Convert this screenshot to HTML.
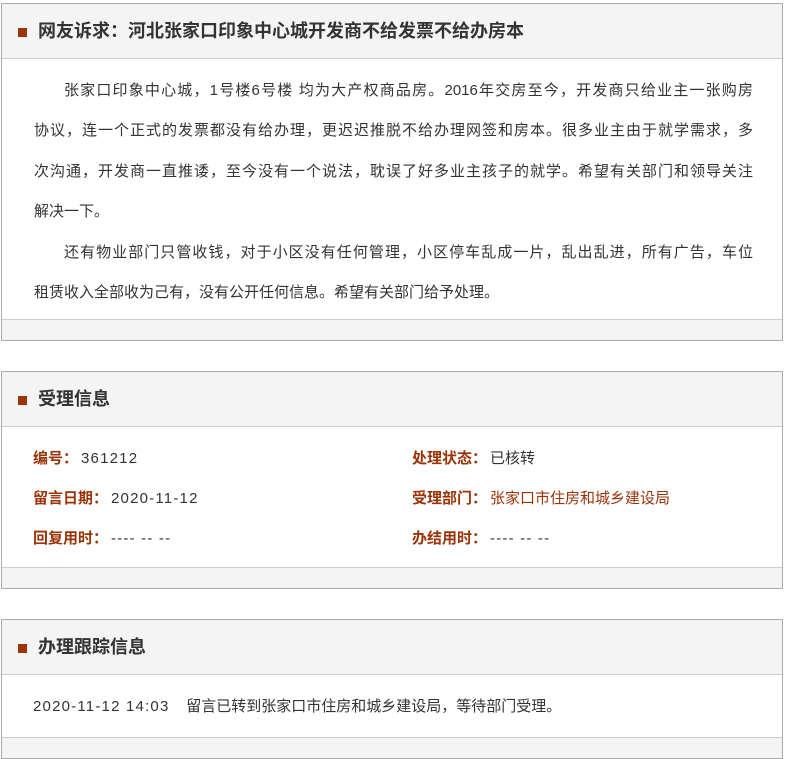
<!DOCTYPE html>
<html><head><meta charset="utf-8"><style>
*{margin:0;padding:0;box-sizing:border-box}
body{width:786px;height:741px;overflow:hidden;background:#fff;font-family:"Liberation Sans","Noto Sans CJK SC",sans-serif;color:#333}
.p{position:absolute;left:1px;width:782px;border:1px solid #aaa}
.h{height:55px;background:#f4f4f4;border-bottom:1px solid #ccc;position:relative}
.h i{position:absolute;left:16px;top:24px;width:9px;height:9px;background:#9b3308}
.h b{position:absolute;left:36px;top:14px;font-size:18px;line-height:26px;color:#333;white-space:nowrap}
.f{height:21px;background:#f4f4f4;border-top:1px solid #ccc}
.b{font-size:15px;line-height:40.4px;padding:12px 29px 6px 32px}
.b div{white-space:nowrap;text-align:justify;text-align-last:justify}
.b div.n{text-align-last:left}
.b div.in{padding-left:30px}
.r{position:relative;height:40px;font-size:15px;line-height:40px;white-space:nowrap}
.r>span{position:absolute;white-space:nowrap}
.l{color:#9b3308;font-weight:bold;margin-right:3px}
.v{letter-spacing:1.2px}
</style></head><body>
<div class="p" style="top:3px">
<div class="h"><i></i><b>网友诉求：河北张家口印象中心城开发商不给发票不给办房本</b></div>
<div class="b" style="height:260px">
<div class="in">张家口印象中心城，1号楼6号楼 均为大产权商品房。2016年交房至今，开发商只给业主一张购房</div>
<div>协议，连一个正式的发票都没有给办理，更迟迟推脱不给办理网签和房本。很多业主由于就学需求，多</div>
<div>次沟通，开发商一直推诿，至今没有一个说法，耽误了好多业主孩子的就学。希望有关部门和领导关注</div>
<div class="n">解决一下。</div>
<div class="in">还有物业部门只管收钱，对于小区没有任何管理，小区停车乱成一片，乱出乱进，所有广告，车位</div>
<div class="n">租赁收入全部收为己有，没有公开任何信息。希望有关部门给予处理。</div>
</div>
<div class="f"></div></div>

<div class="p" style="top:371px">
<div class="h"><i></i><b>受理信息</b></div>
<div style="height:140px;padding-top:12px">
<div class="r"><span style="left:31px"><span class="l">编号：</span><span class="v">361212</span></span><span style="left:410px"><span class="l">处理状态：</span>已核转</span></div>
<div class="r"><span style="left:31px"><span class="l">留言日期：</span><span class="v">2020-11-12</span></span><span style="left:410px"><span class="l">受理部门：</span><span style="color:#9b3308">张家口市住房和城乡建设局</span></span></div>
<div class="r"><span style="left:31px"><span class="l">回复用时：</span><span class="v">---- -- --</span></span><span style="left:410px"><span class="l">办结用时：</span><span class="v">---- -- --</span></span></div>
</div>
<div class="f"></div></div>

<div class="p" style="top:619px;height:140px">
<div class="h"><i></i><b>办理跟踪信息</b></div>
<div style="height:62px;padding-top:12px"><div class="r"><span style="left:31px"><span class="v">2020-11-12 14:03</span>&nbsp;&nbsp;&nbsp;&nbsp;留言已转到张家口市住房和城乡建设局，等待部门受理。</span></div></div>
<div class="f"></div></div>
</body></html>
